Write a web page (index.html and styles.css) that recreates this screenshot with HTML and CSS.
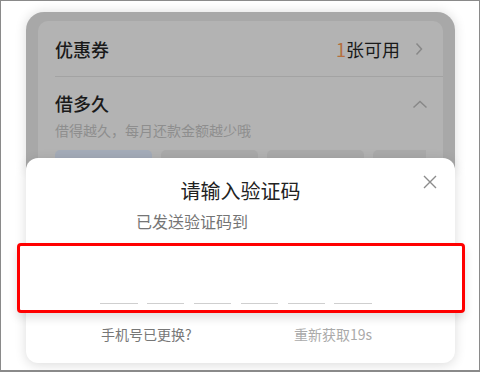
FILE: index.html
```html
<!DOCTYPE html>
<html>
<head>
<meta charset="utf-8">
<title>请输入验证码</title>
<link rel="stylesheet" href="styles.css">
</head>
<body>
<div class="shot">
  <div class="phone">
    <div class="backdrop">
      <div class="card">
        <div class="row coupon">
          <span class="label">优惠券</span>
          <span class="value"><em>1</em>张可用</span>
          <svg class="chev-right" width="8" height="14" viewBox="0 0 8 14"><polyline points="1.5,1.5 6.5,7 1.5,12.5" fill="none" stroke="#888" stroke-width="1.5"/></svg>
        </div>
        <div class="term">
          <div class="term-head">
            <span class="label">借多久</span>
            <svg class="chev-up" width="16" height="9" viewBox="0 0 16 9"><polyline points="1.5,7.5 8,1.5 14.5,7.5" fill="none" stroke="#888" stroke-width="1.5"/></svg>
          </div>
          <p class="hint">借得越久，每月还款金额越少哦</p>
          <div class="tiles">
            <div class="tile on"></div>
            <div class="tile"></div>
            <div class="tile"></div>
            <div class="tile"></div>
          </div>
        </div>
      </div>
    </div>
    <div class="sheet">
      <div class="sheet-head">
        <span></span>
        <h2>请输入验证码</h2>
        <svg class="close" width="14" height="14" viewBox="0 0 14 14"><path d="M1 1L13 13M13 1L1 13" stroke="#8c8c8c" stroke-width="1.4"/></svg>
      </div>
      <p class="sent">已发送验证码到</p>
      <div class="code">
        <span class="cell"></span>
        <span class="cell"></span>
        <span class="cell"></span>
        <span class="cell"></span>
        <span class="cell"></span>
        <span class="cell"></span>
      </div>
      <div class="links">
        <span class="changed">手机号已更换?</span>
        <span class="resend">重新获取19s</span>
      </div>
    </div>
  </div>
</div>
</body>
</html>
```
FILE: styles.css
```css
body { margin: 0; font-family: "Noto Sans CJK SC", "Noto Sans", sans-serif; background: #fff; }
.shot { box-sizing: border-box; width: 480px; height: 372px; border: 1px solid #8a8a8a; border-bottom-width: 2px; padding: 11px 0 0 25px; overflow: hidden; }
.phone { width: 429px; }
.backdrop { height: 158px; padding: 9px 12px 0; box-sizing: border-box; background: #a8a8a8; border-radius: 18px 18px 0 0; box-shadow: 0 0 12px rgba(0,0,0,.14); }
.card { height: 149px; background: #b3b3b3; border-radius: 10px 10px 0 0; overflow: hidden; }
.row { display: flex; align-items: center; height: 55px; margin-left: 17px; padding-right: 20px; border-bottom: 1px solid #a3a3a3; }
.label { font-size: 18px; font-weight: 500; line-height: 26px; color: #1a1a1a; }
.value { margin-left: auto; font-size: 18px; color: #1a1a1a; }
.value em { font-style: normal; color: #b56f3e; }
.chev-right { margin-left: 15px; }
.term { padding: 13px 0 0 17px; }
.term-head { display: flex; align-items: center; justify-content: space-between; padding-right: 15px; }
.chev-up { margin-top: 2px; }
.hint { margin: 4px 0 0; font-size: 14px; line-height: 20px; color: #8e8e8e; }
.tiles { display: flex; gap: 9px; margin: 10px 17px 0 0; overflow: hidden; }
.tile { flex: 0 0 97px; height: 50px; border-radius: 5px; background: #aaaaaa; }
.tile.on { background: #a4acb9; }
.sheet { margin-top: -12px; padding: 17px 18px 19px 0; background: #fff; border-radius: 12px; box-shadow: 0 2px 12px rgba(0,0,0,.14); position: relative; }
.sheet-head { display: grid; grid-template-columns: 1fr auto 1fr; align-items: start; }
.sheet-head h2 { margin: 2px 0 0 18px; font-size: 20px; font-weight: normal; line-height: 28px; color: #222; }
.close { justify-self: end; }
.sent { margin: 5px 0 0 110px; font-size: 16px; line-height: 22px; color: #757575; }
.code { display: flex; gap: 9.4px; box-sizing: border-box; width: 448px; height: 70px; margin: 11px 0 0 -9px; padding: 0 0 6px 80px; align-items: flex-end; background: #fff; border: 3px solid #f00; border-radius: 4px; box-shadow: 0 5px 10px rgba(0,0,0,.12); }
.cell { width: 37.5px; height: 34px; border-bottom: 1px solid #cfcfcf; }
.links { display: flex; justify-content: space-between; width: 271px; margin: 11px 0 0 75px; font-size: 14px; line-height: 20px; }
.changed { color: #777; }
.resend { color: #aaa; }
```
